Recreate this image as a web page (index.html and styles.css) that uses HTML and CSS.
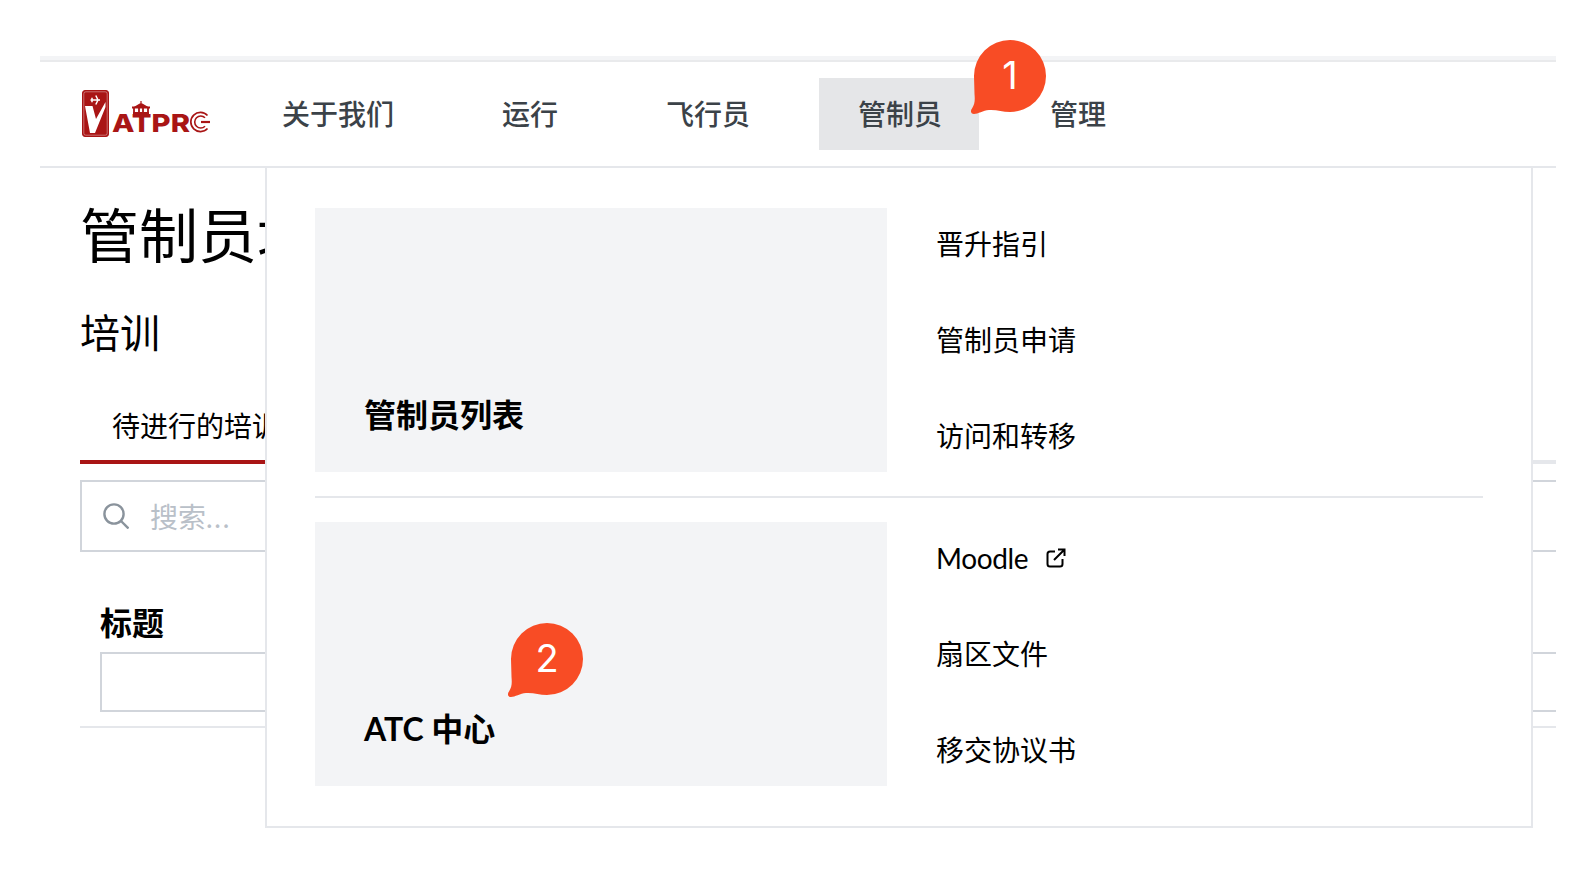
FILE: index.html
```html
<!DOCTYPE html>
<html lang="zh">
<head>
<meta charset="utf-8">
<title>VATPRC</title>
<link rel="stylesheet" href="styles.css">
</head>
<body>
<div class="page">
  <div class="strip"></div>
  <header class="header">
    <svg class="logo" viewBox="0 0 130 52" width="130" height="52" aria-label="VATPRC">
      <rect x="2.5" y="2.5" width="26" height="46" rx="2.5" fill="#a91515" stroke="#a91515" stroke-width="1"/>
      <rect x="3.8" y="3.8" width="23.4" height="43.4" rx="2" fill="none" stroke="#fff" stroke-opacity=".55" stroke-width=".7"/>
      <path d="M5 18 L12.5 18 L16 31 L25.5 14 L25.5 19 L15 45 L10 45 Z" fill="#fff"/>
      <path d="M10.5 12 L20 12 M15.8 7.5 L18 12 L15.8 16.5 M12 9.7 L12 14.3" stroke="#fff" stroke-width="1.5" fill="none"/>
      <text class="logo-text" x="32" y="44" textLength="78" lengthAdjust="spacingAndGlyphs">ATPR</text>
      <path d="M61 13 V16 M55 19 L61 15.5 L67 19 Z" fill="#a91515" stroke="#a91515" stroke-width="1.2"/>
      <path d="M52 19.5 H70 M53 25 H69 M54 19.5 V26 M59 19.5 V26 M63 19.5 V26 M68 19.5 V26" fill="none" stroke="#a91515" stroke-width="1.8"/>
      <path d="M127.5 27.5 A9.6 9.6 0 1 0 127.5 40.5" fill="none" stroke="#a91515" stroke-width="1.7"/>
      <path d="M125 29.8 A6 6 0 1 0 125 38.2" fill="none" stroke="#a91515" stroke-width="1.6"/>
      <path d="M121 34 H130" stroke="#a91515" stroke-width="2.2"/>
    </svg>
    <nav class="nav">
      <a class="nav-item">关于我们</a>
      <a class="nav-item">运行</a>
      <a class="nav-item">飞行员</a>
      <a class="nav-item active">管制员</a>
      <a class="nav-item">管理</a>
    </nav>
  </header>
  <main class="main">
    <h1 class="title">管制员培训</h1>
    <h2 class="subtitle">培训</h2>
    <div class="tabs"><div class="tab">待进行的培训</div></div>
    <div class="search">
      <svg class="search-icon" viewBox="0 0 26 26" width="26" height="26"><circle cx="11" cy="11" r="9.6" fill="none" stroke="#8a939c" stroke-width="2.4"/><path d="M18 18 L25.5 25.5" stroke="#8a939c" stroke-width="2.4"/></svg>
      <span class="placeholder">搜索<span class="dots">...</span></span>
    </div>
    <div class="table">
      <div class="col-label">标题</div>
      <div class="col-input"></div>
    </div>
  </main>

  <section class="menu">
    <div class="menu-row">
      <div class="card"><span class="card-title">管制员列表</span></div>
      <ul class="links">
        <li>晋升指引</li>
        <li>管制员申请</li>
        <li>访问和转移</li>
      </ul>
    </div>
    <hr class="divider">
    <div class="menu-row">
      <div class="card"><span class="card-title">ATC 中心</span></div>
      <ul class="links">
        <li class="ext">Moodle
          <svg viewBox="0 0 20 20" width="20" height="20"><path d="M9 3.5 H4 A2.5 2.5 0 0 0 1.5 6 V16 A2.5 2.5 0 0 0 4 18.5 H14 A2.5 2.5 0 0 0 16.5 16 V11 M8 12 L18.5 1.5 M12 1.5 H18.5 V8" fill="none" stroke="#000" stroke-width="2"/></svg>
        </li>
        <li>扇区文件</li>
        <li>移交协议书</li>
      </ul>
    </div>
  </section>

  <div class="badge badge-one">
    <svg viewBox="0 0 78 78" width="78" height="78"><path class="bubble" d="M41 2 A36 36 0 1 1 41 74 C33 74 28 71.5 20 72 C14 72.5 9 76 5 76 C2 76 1 73 3 70.5 C6 66 6 62 5.5 56 L5 38 A36 36 0 0 1 41 2 Z"/></svg>
    <span class="badge-num">1</span>
  </div>
  <div class="badge badge-two">
    <svg viewBox="0 0 78 78" width="78" height="78"><path class="bubble" d="M41 2 A36 36 0 1 1 41 74 C33 74 28 71.5 20 72 C14 72.5 9 76 5 76 C2 76 1 73 3 70.5 C6 66 6 62 5.5 56 L5 38 A36 36 0 0 1 41 2 Z"/></svg>
    <span class="badge-num">2</span>
  </div>
</div>
</body>
</html>
```

FILE: styles.css
```css
* { box-sizing: border-box; }
html, body { margin: 0; padding: 0; background: #fff; }
body {
  font-family: Lato, "Noto Sans CJK SC", sans-serif;
  color: #000;
  height: 890px;
  overflow: hidden;
}
.page { position: relative; padding: 56px 40px 0; }
.strip { height: 6px; background: #f3f4f6; border-bottom: 2px solid #e9eaec; }
.header {
  display: flex;
  align-items: center;
  height: 106px;
  padding: 0 0 0 40px;
  border-bottom: 2px solid #e5e7eb;
}
.logo { flex: none; margin-right: 33px; }
.logo-text { font-family: Inter, sans-serif; font-weight: 800; font-size: 25px; fill: #a91515; }
.nav { display: flex; gap: 32px; }
.nav-item {
  padding: 0 37px 0 39px;
  height: 72px;
  line-height: 72px;
  font-size: 28px;
  font-weight: 500;
  color: #3b4248;
}
.nav-item.active { background: #e5e6e8; }
.main { padding-left: 40px; overflow: hidden; height: 560px; }
.title { margin: 32px 0 0; font-size: 59px; line-height: 72px; font-weight: 400; white-space: nowrap; }
.subtitle { margin: 37px 0 0; font-size: 40px; line-height: 48px; font-weight: 400; }
.tabs { margin-top: 43px; border-bottom: 4px solid #e5e7eb; }
.tab {
  display: inline-block;
  width: 300px;
  padding: 6px 0 14px 32px;
  font-size: 28px;
  line-height: 40px;
  margin-bottom: -4px;
  border-bottom: 4px solid #a91515;
  white-space: nowrap;
}
.search {
  display: flex;
  align-items: center;
  gap: 21px;
  height: 72px;
  margin: 16px -8px 0 0;
  padding-left: 21px;
  border: 2px solid #d1d5db;
}
.search-icon { flex: none; }
.placeholder { font-size: 28px; color: #b9c0c8; }
.dots { letter-spacing: 1.7px; }
.table { padding: 0 0 14px 20px; margin-top: 55px; border-bottom: 2px solid #e5e7eb; }
.col-label { font-size: 32px; font-weight: 700; line-height: 30px; padding-top: 1px; height: 31px; }
.col-input { height: 60px; margin: 14px -8px 0 0; border: 2px solid #d1d5db; }
.menu {
  position: absolute;
  top: 168px;
  left: 265px;
  width: 1268px;
  height: 660px;
  padding: 40px 48px 0;
  background: #fff;
  border: 2px solid #e5e7eb;
  border-top: 0;
}
.menu-row { display: flex; gap: 49px; align-items: center; }
.card {
  flex: none;
  display: flex;
  align-items: flex-end;
  width: 572px;
  height: 264px;
  padding: 0 0 37px 49px;
  background: #f3f4f6;
}
.card-title { font-size: 32px; font-weight: 700; line-height: 40px; }
.links {
  list-style: none;
  margin: 0;
  padding: 0;
  display: flex;
  flex-direction: column;
  gap: 56px;
  font-size: 28px;
  line-height: 40px;
}
.ext { display: flex; align-items: center; gap: 18px; letter-spacing: -0.35px; }
.divider { margin: 24px 0; height: 2px; border: 0; background: #e5e7eb; }
.badge { position: absolute; width: 78px; height: 78px; }
.badge svg { display: block; }
.bubble { fill: #f84c25; }
.badge-one { left: 969px; top: 38px; }
.badge-two { left: 506px; top: 621px; }
.badge-num {
  position: absolute;
  left: 5px;
  top: 1px;
  width: 72px;
  height: 72px;
  line-height: 72px;
  text-align: center;
  color: #fff;
  font-family: Inter, sans-serif;
  font-size: 38px;
}
```
